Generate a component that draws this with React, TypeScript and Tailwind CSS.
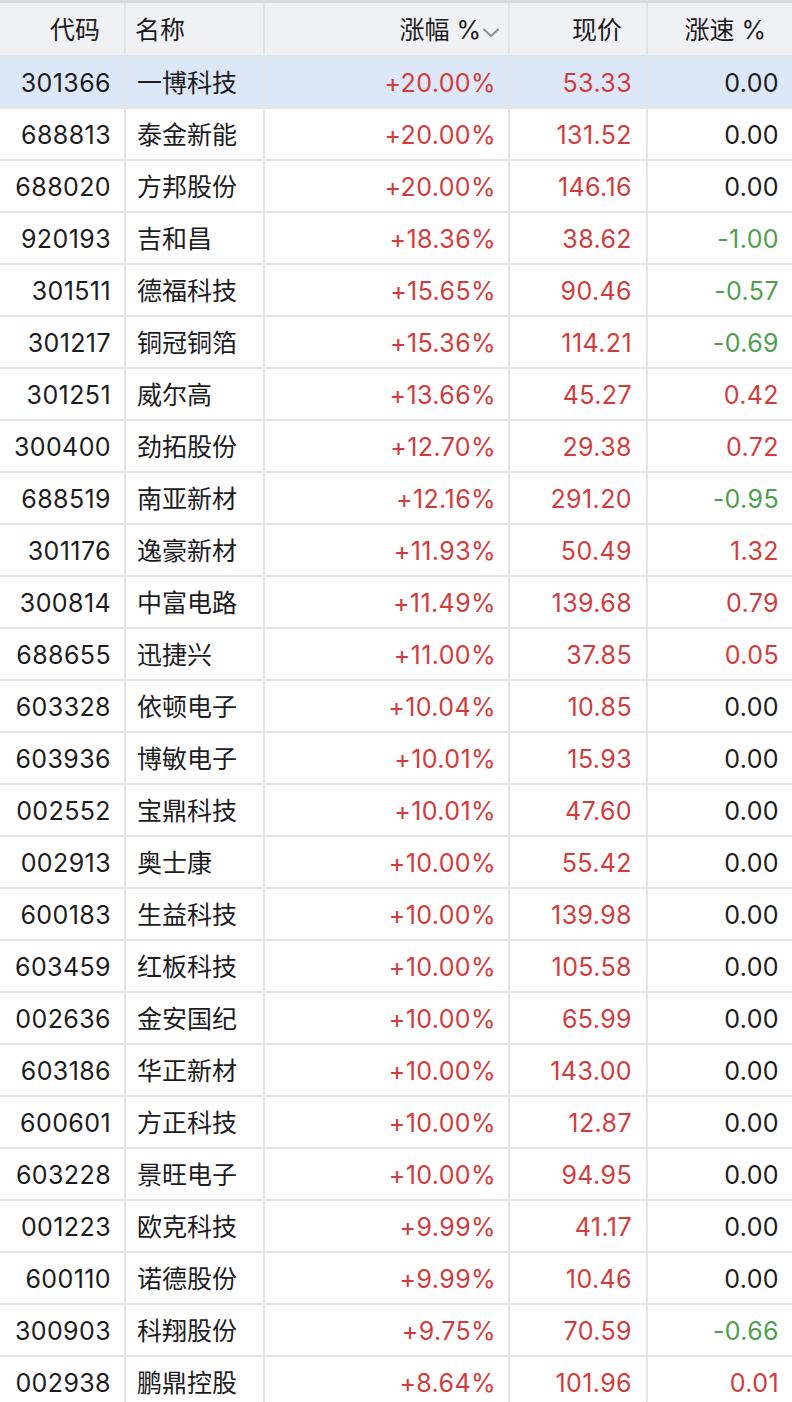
import React from "react";

type Row = [string, string, string, string, string];

const rows: Row[] = [
  ["301366", "一博科技", "+20.00%", "53.33", "0.00"],
  ["688813", "泰金新能", "+20.00%", "131.52", "0.00"],
  ["688020", "方邦股份", "+20.00%", "146.16", "0.00"],
  ["920193", "吉和昌", "+18.36%", "38.62", "-1.00"],
  ["301511", "德福科技", "+15.65%", "90.46", "-0.57"],
  ["301217", "铜冠铜箔", "+15.36%", "114.21", "-0.69"],
  ["301251", "威尔高", "+13.66%", "45.27", "0.42"],
  ["300400", "劲拓股份", "+12.70%", "29.38", "0.72"],
  ["688519", "南亚新材", "+12.16%", "291.20", "-0.95"],
  ["301176", "逸豪新材", "+11.93%", "50.49", "1.32"],
  ["300814", "中富电路", "+11.49%", "139.68", "0.79"],
  ["688655", "迅捷兴", "+11.00%", "37.85", "0.05"],
  ["603328", "依顿电子", "+10.04%", "10.85", "0.00"],
  ["603936", "博敏电子", "+10.01%", "15.93", "0.00"],
  ["002552", "宝鼎科技", "+10.01%", "47.60", "0.00"],
  ["002913", "奥士康", "+10.00%", "55.42", "0.00"],
  ["600183", "生益科技", "+10.00%", "139.98", "0.00"],
  ["603459", "红板科技", "+10.00%", "105.58", "0.00"],
  ["002636", "金安国纪", "+10.00%", "65.99", "0.00"],
  ["603186", "华正新材", "+10.00%", "143.00", "0.00"],
  ["600601", "方正科技", "+10.00%", "12.87", "0.00"],
  ["603228", "景旺电子", "+10.00%", "94.95", "0.00"],
  ["001223", "欧克科技", "+9.99%", "41.17", "0.00"],
  ["600110", "诺德股份", "+9.99%", "10.46", "0.00"],
  ["300903", "科翔股份", "+9.75%", "70.59", "-0.66"],
  ["002938", "鹏鼎控股", "+8.64%", "101.96", "0.01"],
];

const speedColor = (v: string) => {
  const n = parseFloat(v);
  if (n > 0) return "text-[#d23c3c]";
  if (n < 0) return "text-[#4f9e50]";
  return "text-[#1c1c1e]";
};

export default function App() {
  return (
    <div
      className="w-[792px] h-[1402px] overflow-hidden bg-white text-[25px] text-[#1c1c1e]"
      style={{ fontFamily: '"Inter", "Noto Sans CJK SC", sans-serif' }}
    >
      <div className="border-t-[3px] border-[#d9dadc]">
        <div className="flex h-[54px] bg-[#eff1f4] border-b-2 border-[#e2e4e7]">
          <div className="w-[126px] border-r-2 border-[#e2e4e7] flex items-center justify-end pr-[24px] pt-[4px]">
            代码
          </div>
          <div className="w-[139px] border-r-2 border-[#e2e4e7] flex items-center pl-[9px] pt-[4px]">
            名称
          </div>
          <div className="w-[245px] border-r-2 border-[#e2e4e7] flex items-center justify-end pr-[8px] pt-[4px]">
            <span>涨幅 %</span>
            <svg width="18" height="12" viewBox="0 0 18 12" className="ml-[1px] mt-[4px]">
              <path d="M2 2.5 L9 9 L16 2.5" fill="none" stroke="#8e9298" strokeWidth="2.2" strokeLinecap="round" strokeLinejoin="round" />
            </svg>
          </div>
          <div className="w-[138px] border-r-2 border-[#e2e4e7] flex items-center justify-end pr-[24px] pt-[4px]">
            现价
          </div>
          <div className="flex-1 flex items-center justify-end pr-[26px] pt-[4px]">涨速 %</div>
        </div>
        {rows.map((r, i) => (
          <div
            key={r[0] + i}
            className={
              "flex h-[52px] border-b-2 border-[#e5e5e7] " +
              (i === 0 ? "bg-[#dce7f8]" : "bg-white")
            }
          >
            <div className="w-[126px] border-r-2 border-[#e5e5e7] flex items-center justify-end pr-[13px] pt-[3px] tracking-[0.4px]">
              {r[0]}
            </div>
            <div className="w-[139px] border-r-2 border-[#e5e5e7] flex items-center pl-[11px] pt-[3px]">
              {r[1]}
            </div>
            <div className="w-[245px] border-r-2 border-[#e5e5e7] flex items-center justify-end pr-[12px] pt-[3px] tracking-[0.4px] text-[#d23c3c]">
              {r[2]}
            </div>
            <div className="w-[138px] border-r-2 border-[#e5e5e7] flex items-center justify-end pr-[14px] pt-[3px] tracking-[0.4px] text-[#d23c3c]">
              {r[3]}
            </div>
            <div className={"flex-1 flex items-center justify-end pr-[13px] pt-[3px] tracking-[0.4px] " + speedColor(r[4])}>
              {r[4]}
            </div>
          </div>
        ))}
      </div>
    </div>
  );
}
